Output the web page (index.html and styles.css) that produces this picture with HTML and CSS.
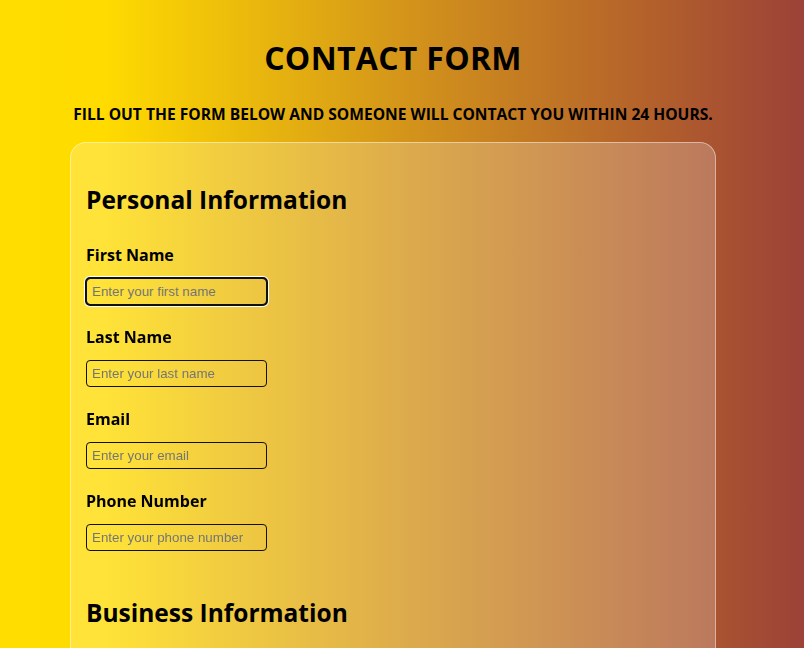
FILE: index.html
```html
<!DOCTYPE html>
<html lang="en">
<head>
<meta charset="utf-8">
<title>Contact Form</title>
<link rel="stylesheet" href="styles.css">
</head>
<body>
<main class="page">
  <h1 class="title">CONTACT FORM</h1>
  <p class="subtitle">FILL OUT THE FORM BELOW AND SOMEONE WILL CONTACT YOU WITHIN 24 HOURS.</p>
  <form class="card">
    <section class="section">
      <h2 class="section-title">Personal Information</h2>
      <label class="field-label" for="first">First Name</label>
      <input class="field-input" id="first" type="text" placeholder="Enter your first name" autofocus>
      <label class="field-label" for="last">Last Name</label>
      <input class="field-input" id="last" type="text" placeholder="Enter your last name">
      <label class="field-label" for="email">Email</label>
      <input class="field-input" id="email" type="email" placeholder="Enter your email">
      <label class="field-label" for="phone">Phone Number</label>
      <input class="field-input" id="phone" type="tel" placeholder="Enter your phone number">
    </section>
    <section class="section">
      <h2 class="section-title">Business Information</h2>
    </section>
  </form>
</main>
</body>
</html>
```

FILE: styles.css
```css
html {
  min-height: 100%;
  background: linear-gradient(90deg, #ffdd00 0%, #ffdb00 13%, #d4951a 50%, #b4622b 80%, #9c4238 100%);
  background-attachment: fixed;
}

body {
  margin: 0;
  font-family: "Open Sans", "DejaVu Sans", sans-serif;
  color: #000;
}

.page {
  width: 646px;
  margin: 0 0 0 70px;
  padding-top: 38px;
  display: flex;
  flex-direction: column;
  align-items: center;
}

.title {
  margin: 0;
  font-size: 32px;
  line-height: 40px;
  font-weight: 700;
  letter-spacing: 0.3px;
}

.subtitle {
  margin: 24px 0 0;
  font-size: 15.6px;
  line-height: 24px;
  font-weight: 700;
  white-space: nowrap;
}

.card {
  align-self: stretch;
  margin-top: 16px;
  padding: 39px 15px 60px;
  border: 1px solid rgba(255, 255, 255, 0.45);
  border-radius: 16px;
  background: rgba(255, 255, 255, 0.22);
  display: flex;
  flex-direction: column;
  gap: 24px;
  min-height: 700px;
}

.section {
  display: flex;
  flex-direction: column;
  align-items: flex-start;
}

.section-title {
  margin: 0 0 25px;
  font-size: 24.5px;
  line-height: 36px;
  font-weight: 700;
}

.field-label {
  font-size: 16px;
  line-height: 24px;
  font-weight: 700;
  margin-bottom: 11px;
}

.field-input {
  box-sizing: border-box;
  width: 181px;
  height: 27px;
  margin: 0 0 20px;
  padding: 5px;
  border: 1px solid #111;
  border-radius: 4px;
  background: transparent;
  font-family: Arial, "Liberation Sans", sans-serif;
  font-size: 13.333px;
  color: #000;
}

.field-input::placeholder {
  color: #757575;
}

.field-input:focus {
  outline: 2px solid #101010;
  outline-offset: -1px;
  box-shadow: 0 0 0 2px #fff;
}
```
